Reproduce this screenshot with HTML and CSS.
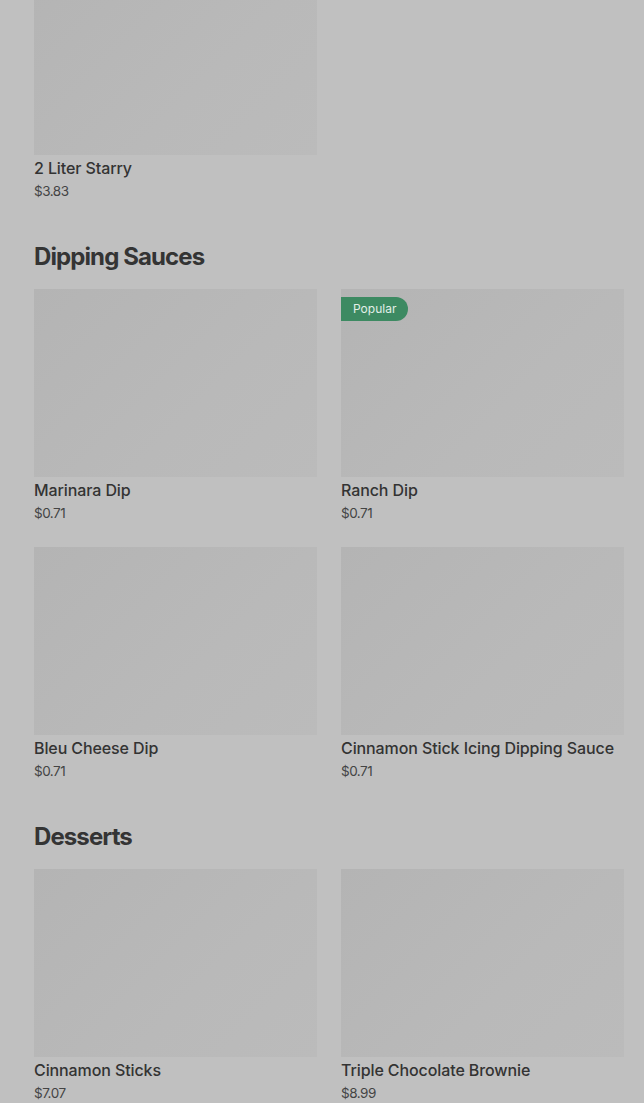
FILE: index.html
```html
<!DOCTYPE html>
<html lang="en">
<head>
    <meta charset="UTF-8">
    <title>Menu</title>
    <link rel="stylesheet" href="styles.css">
</head>
<body>
    <div class="menu">
        <!-- drinks (scrolled) -->
        <section class="category first">
            <div class="grid">
                <div class="item">
                    <div class="thumb"></div>
                    <div class="info">
                        <h3 class="name">2 Liter Starry</h3>
                        <p class="price">$3.83</p>
                    </div>
                </div>
            </div>
        </section>

        <!-- dipping sauces -->
        <section class="category">
            <h2 class="category-title">Dipping Sauces</h2>
            <div class="grid">
                <div class="item">
                    <div class="thumb"></div>
                    <div class="info">
                        <h3 class="name">Marinara Dip</h3>
                        <p class="price">$0.71</p>
                    </div>
                </div>
                <div class="item">
                    <div class="thumb">
                        <span class="badge">Popular</span>
                    </div>
                    <div class="info">
                        <h3 class="name">Ranch Dip</h3>
                        <p class="price">$0.71</p>
                    </div>
                </div>
                <div class="item">
                    <div class="thumb"></div>
                    <div class="info">
                        <h3 class="name">Bleu Cheese Dip</h3>
                        <p class="price">$0.71</p>
                    </div>
                </div>
                <div class="item">
                    <div class="thumb"></div>
                    <div class="info">
                        <h3 class="name">Cinnamon Stick Icing Dipping Sauce</h3>
                        <p class="price">$0.71</p>
                    </div>
                </div>
            </div>
        </section>

        <!-- desserts -->
        <section class="category">
            <h2 class="category-title">Desserts</h2>
            <div class="grid">
                <div class="item">
                    <div class="thumb"></div>
                    <div class="info">
                        <h3 class="name">Cinnamon Sticks</h3>
                        <p class="price">$7.07</p>
                    </div>
                </div>
                <div class="item">
                    <div class="thumb"></div>
                    <div class="info">
                        <h3 class="name">Triple Chocolate Brownie</h3>
                        <p class="price">$8.99</p>
                    </div>
                </div>
            </div>
        </section>
    </div>
</body>
</html>
```

FILE: styles.css
```css
* {
    margin: 0;
    padding: 0;
    box-sizing: border-box;
}

body {
    font-family: Inter, "Liberation Sans", sans-serif;
    background: #c0c0c0;
    color: #333;
    overflow: hidden;
}

/* 메뉴 */
.menu {
    padding: 0 20px 0 34px;
    margin-top: -33px;
}

.category {
    margin-top: 40px;
}

.category.first {
    margin-top: 0;
}

.category-title {
    font-size: 24px;
    line-height: 32px;
    font-weight: 700;
    letter-spacing: -0.9px;
    color: #343434;
    margin-bottom: 16px;
}

.grid {
    display: grid;
    grid-template-columns: 283px 283px;
    column-gap: 24px;
    row-gap: 24px;
}

.thumb {
    position: relative;
    height: 188px;
    background: linear-gradient(135deg, #b4b4b4 0%, #b9b9b9 60%, #bbbbbb 100%);
}

.badge {
    position: absolute;
    top: 8px;
    left: 0;
    height: 24px;
    padding: 0 12px;
    line-height: 24px;
    font-size: 12px;
    color: #e2efe7;
    background: #3d8a62;
    border-radius: 0 12px 12px 0;
}

.info {
    padding-top: 3px;
}

.name {
    font-size: 16px;
    line-height: 20px;
    font-weight: 500;
    letter-spacing: -0.1px;
    color: #333;
}

.price {
    margin-top: 3px;
    font-size: 13.5px;
    line-height: 20px;
    color: #444;
    letter-spacing: -0.5px;
}
```
